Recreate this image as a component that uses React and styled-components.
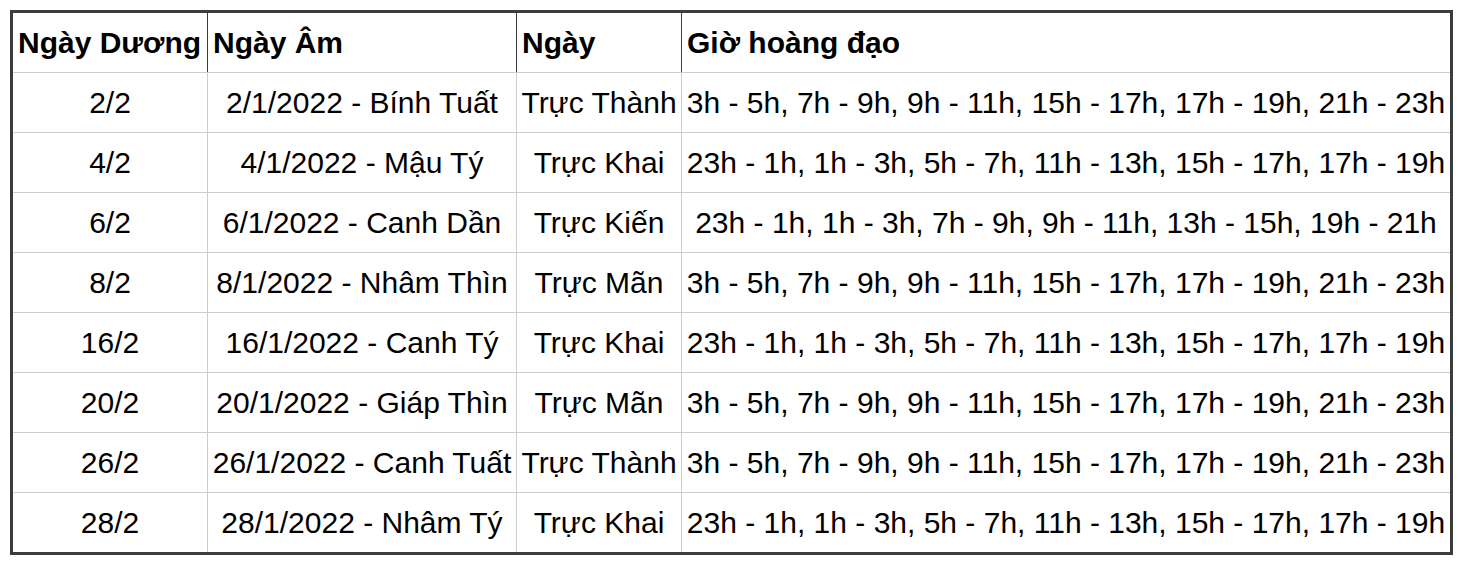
import React from "react";
import styled, { createGlobalStyle } from "styled-components";

const Global = createGlobalStyle`
  html, body { margin: 0; padding: 0; background: #fff; }
  body { font-family: "Liberation Sans", Arial, sans-serif; color: #000; }
`;

const Wrap = styled.div`
  padding: 10px 8px 0 10px;
`;

const Table = styled.table`
  width: 1440px;
  table-layout: fixed;
  border-collapse: collapse;
  border: 3px solid #3c3c3c;
  font-size: 30px;
`;

const Col = styled.col`
  width: ${(p) => p.$w}px;
`;

const HeadCell = styled.th`
  height: 59px;
  padding: 0 5px;
  text-align: left;
  font-weight: bold;
  border-left: 1px solid #3c3c3c;
  border-bottom: 1px solid #cccccc;
  white-space: nowrap;
  vertical-align: middle;
`;

const Cell = styled.td`
  height: 59px;
  padding: 0 2px;
  text-align: center;
  border: 1px solid #cccccc;
  white-space: nowrap;
  overflow: visible;
  vertical-align: middle;
`;

const widths = [196, 309, 165, 770];
const headers = ["Ngày Dương", "Ngày Âm", "Ngày", "Giờ hoàng đạo"];

const rows = [
  ["2/2", "2/1/2022 - Bính Tuất", "Trực Thành", "3h - 5h, 7h - 9h, 9h - 11h, 15h - 17h, 17h - 19h, 21h - 23h"],
  ["4/2", "4/1/2022 - Mậu Tý", "Trực Khai", "23h - 1h, 1h - 3h, 5h - 7h, 11h - 13h, 15h - 17h, 17h - 19h"],
  ["6/2", "6/1/2022 - Canh Dần", "Trực Kiến", "23h - 1h, 1h - 3h, 7h - 9h, 9h - 11h, 13h - 15h, 19h - 21h"],
  ["8/2", "8/1/2022 - Nhâm Thìn", "Trực Mãn", "3h - 5h, 7h - 9h, 9h - 11h, 15h - 17h, 17h - 19h, 21h - 23h"],
  ["16/2", "16/1/2022 - Canh Tý", "Trực Khai", "23h - 1h, 1h - 3h, 5h - 7h, 11h - 13h, 15h - 17h, 17h - 19h"],
  ["20/2", "20/1/2022 - Giáp Thìn", "Trực Mãn", "3h - 5h, 7h - 9h, 9h - 11h, 15h - 17h, 17h - 19h, 21h - 23h"],
  ["26/2", "26/1/2022 - Canh Tuất", "Trực Thành", "3h - 5h, 7h - 9h, 9h - 11h, 15h - 17h, 17h - 19h, 21h - 23h"],
  ["28/2", "28/1/2022 - Nhâm Tý", "Trực Khai", "23h - 1h, 1h - 3h, 5h - 7h, 11h - 13h, 15h - 17h, 17h - 19h"],
];

export default function App() {
  return (
    <Wrap>
      <Global />
      <Table>
        <colgroup>
          {widths.map((w, i) => (
            <Col key={i} $w={w} />
          ))}
        </colgroup>
        <thead>
          <tr>
            {headers.map((h) => (
              <HeadCell key={h}>{h}</HeadCell>
            ))}
          </tr>
        </thead>
        <tbody>
          {rows.map((r, i) => (
            <tr key={i}>
              {r.map((c, j) => (
                <Cell key={j}>{c}</Cell>
              ))}
            </tr>
          ))}
        </tbody>
      </Table>
    </Wrap>
  );
}
